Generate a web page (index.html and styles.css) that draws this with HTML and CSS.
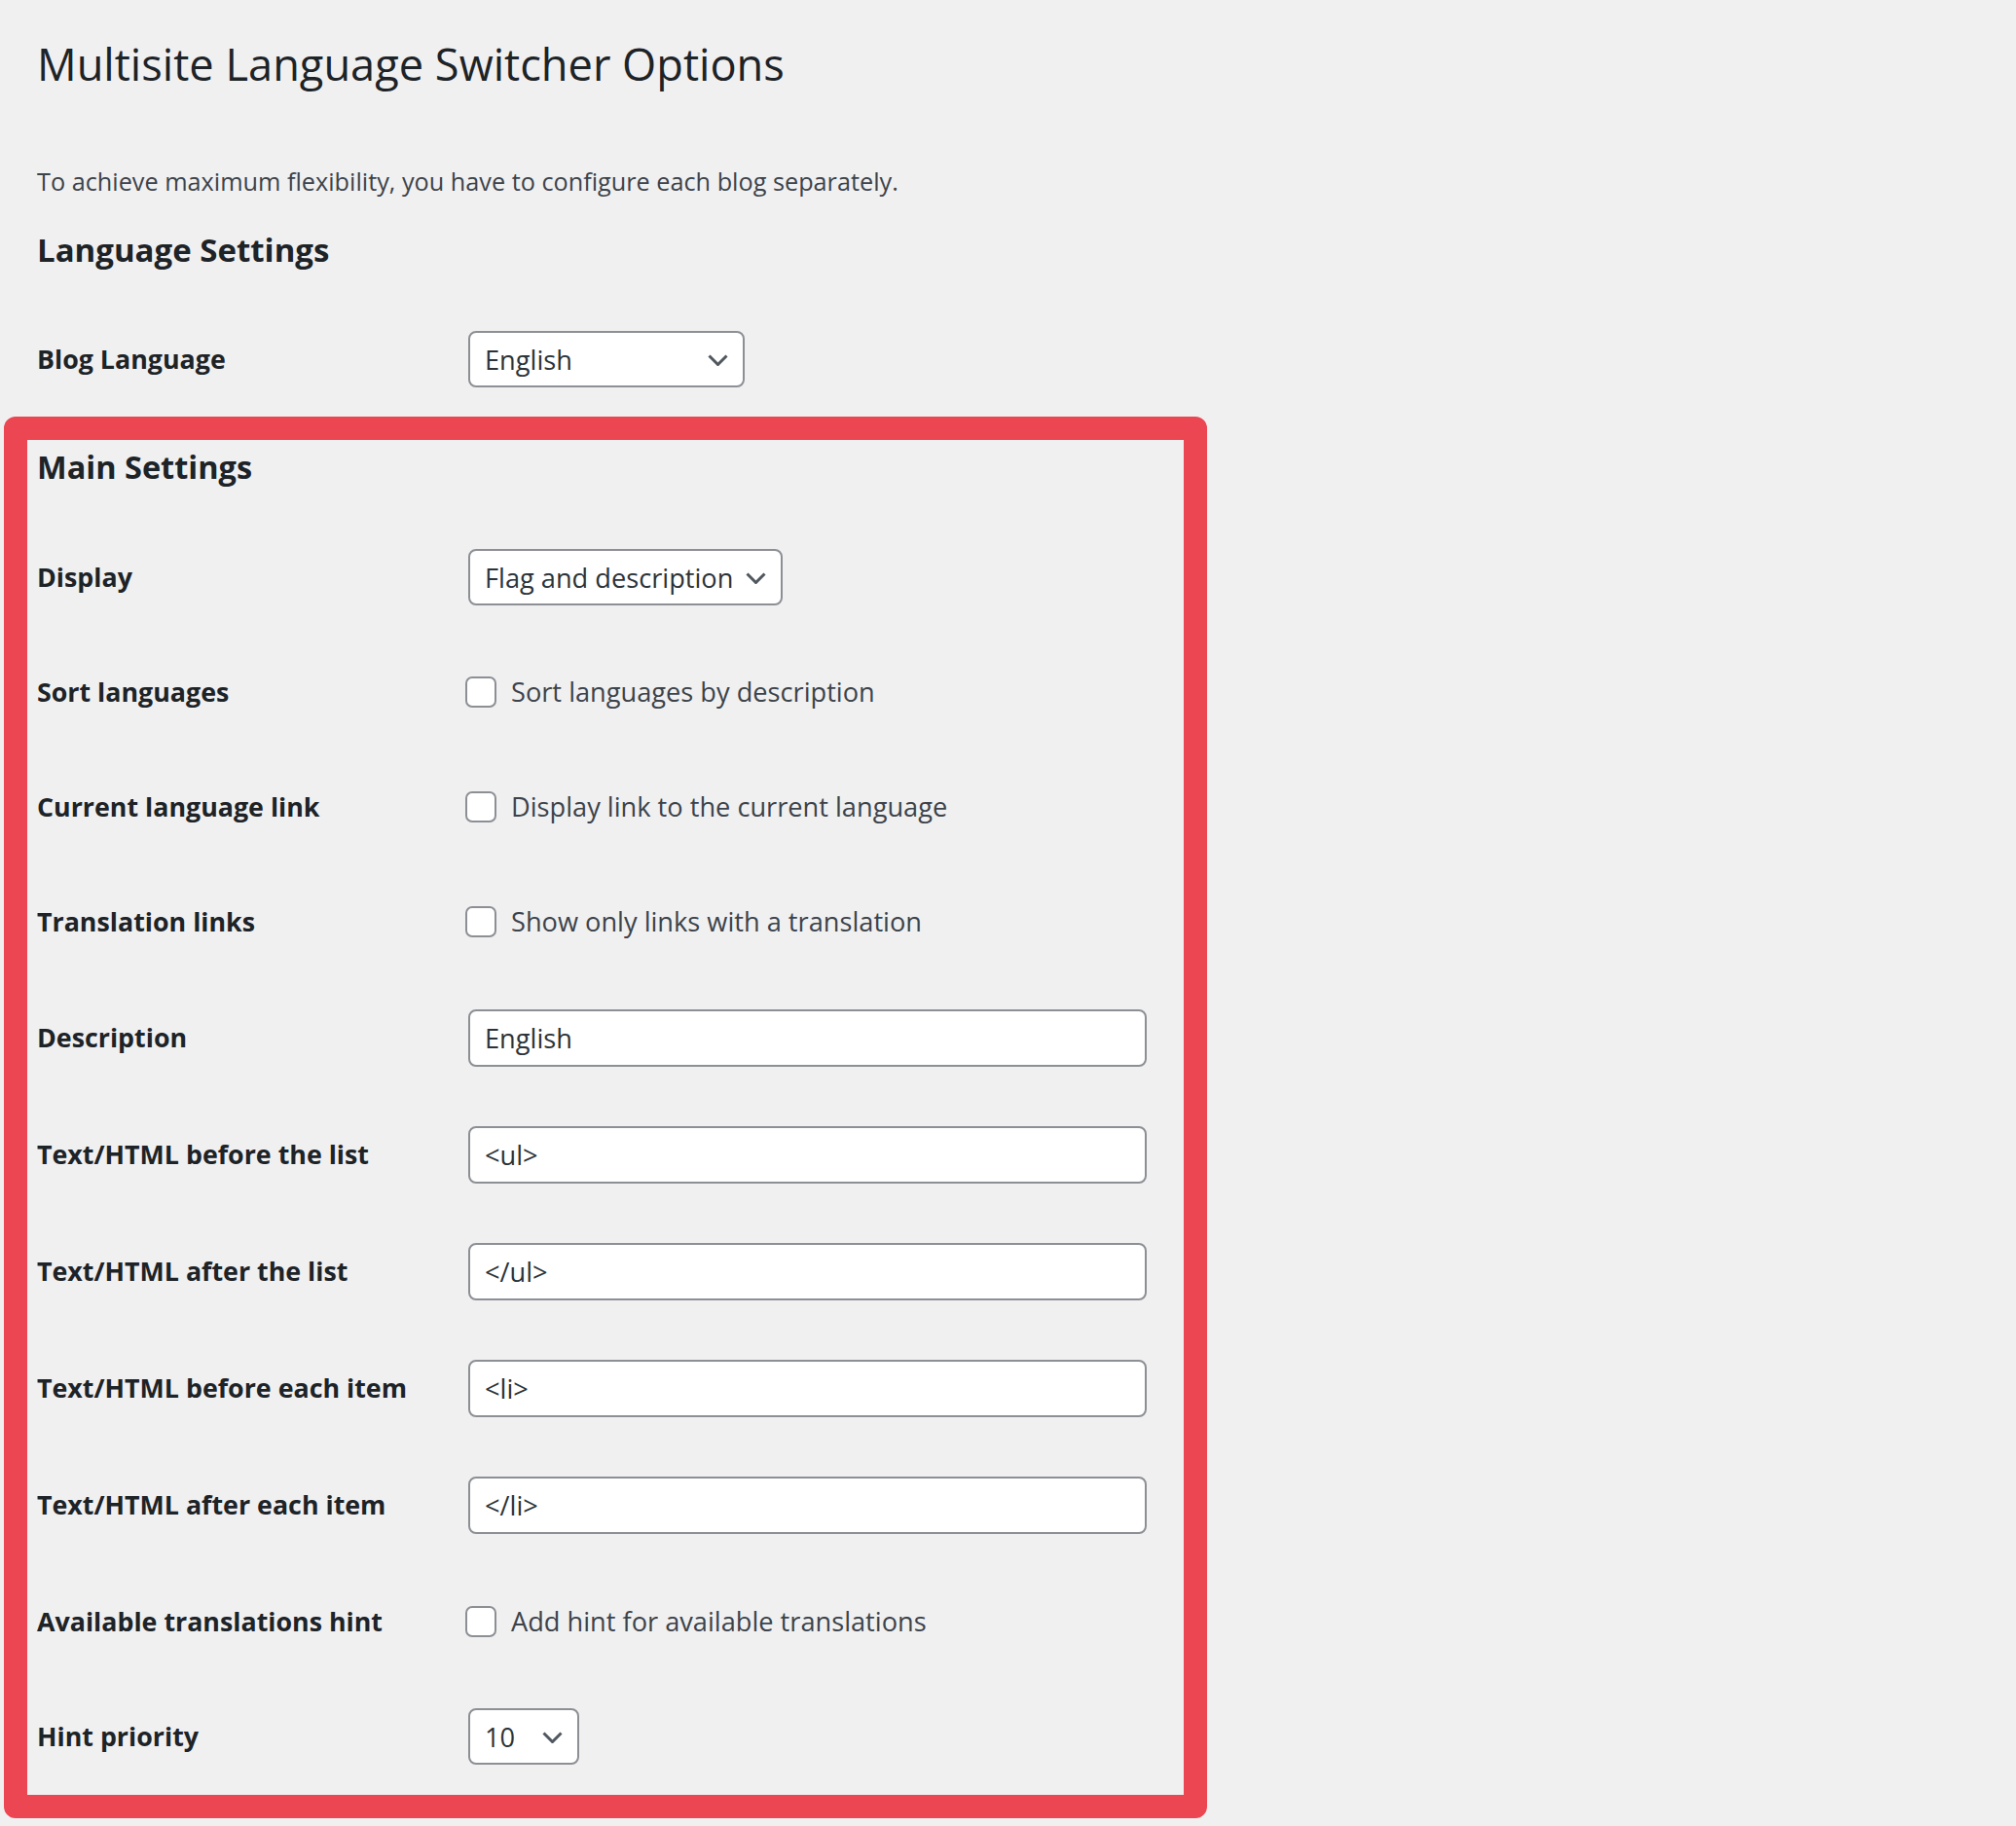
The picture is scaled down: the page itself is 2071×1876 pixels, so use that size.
FILE: index.html
```html
<!DOCTYPE html>
<html lang="en">
<head>
<meta charset="utf-8">
<title>Multisite Language Switcher Options</title>
<link rel="stylesheet" href="styles.css">
</head>
<body>
<div class="wrap">
  <div class="intro">
    <h1 class="title">Multisite Language Switcher Options</h1>
    <p class="lead">To achieve maximum flexibility, you have to configure each blog separately.</p>
    <h2 class="section-title">Language Settings</h2>
    <div class="row row--first">
      <div class="label">Blog Language</div>
      <div class="select select--lang"><span>English</span><svg class="chev" viewBox="0 0 21 12" width="21" height="12"><path d="M1.5 1.5 L10.5 10.5 L19.5 1.5" fill="none" stroke="#50575e" stroke-width="3"/></svg></div>
    </div>
  </div>

  <div class="highlight">
    <h2 class="section-title section-title--boxed">Main Settings</h2>
    <div class="rows">
      <div class="row">
        <div class="label">Display</div>
        <div class="select select--display"><span>Flag and description</span><svg class="chev" viewBox="0 0 21 12" width="21" height="12"><path d="M1.5 1.5 L10.5 10.5 L19.5 1.5" fill="none" stroke="#50575e" stroke-width="3"/></svg></div>
      </div>
      <div class="row">
        <div class="label">Sort languages</div>
        <label class="check"><input type="checkbox" class="box"><span>Sort languages by description</span></label>
      </div>
      <div class="row">
        <div class="label">Current language link</div>
        <label class="check"><input type="checkbox" class="box"><span>Display link to the current language</span></label>
      </div>
      <div class="row">
        <div class="label">Translation links</div>
        <label class="check"><input type="checkbox" class="box"><span>Show only links with a translation</span></label>
      </div>
      <div class="row row--input">
        <div class="label">Description</div>
        <input type="text" class="field" value="English">
      </div>
      <div class="row row--input">
        <div class="label">Text/HTML before the list</div>
        <input type="text" class="field" value="&lt;ul&gt;">
      </div>
      <div class="row row--input">
        <div class="label">Text/HTML after the list</div>
        <input type="text" class="field" value="&lt;/ul&gt;">
      </div>
      <div class="row row--input">
        <div class="label">Text/HTML before each item</div>
        <input type="text" class="field" value="&lt;li&gt;">
      </div>
      <div class="row row--input">
        <div class="label">Text/HTML after each item</div>
        <input type="text" class="field" value="&lt;/li&gt;">
      </div>
      <div class="row row--hint">
        <div class="label">Available translations hint</div>
        <label class="check"><input type="checkbox" class="box"><span>Add hint for available translations</span></label>
      </div>
      <div class="row">
        <div class="label">Hint priority</div>
        <div class="select select--priority"><span>10</span><svg class="chev" viewBox="0 0 21 12" width="21" height="12"><path d="M1.5 1.5 L10.5 10.5 L19.5 1.5" fill="none" stroke="#50575e" stroke-width="3"/></svg></div>
      </div>
    </div>
  </div>
</div>
</body>
</html>
```
FILE: styles.css
```css
html, body {
  margin: 0;
  padding: 0;
  background: #f0f0f1;
}
body {
  font-family: "Open Sans", "Noto Sans", "Liberation Sans", sans-serif;
  color: #3c434a;
}
.wrap {
  padding-left: 4px;
  width: 1236px;
  padding-bottom: 7px;
}
.intro {
  padding-left: 34px;
}
.title {
  margin: 34px 0 0;
  height: 64px;
  line-height: 64px;
  font-size: 45.2px;
  font-weight: 400;
  color: #1d2327;
}
.lead {
  margin: 70px 0 0;
  line-height: 36px;
  font-size: 25.25px;
  color: #3c434a;
}
.section-title {
  margin: 33px 0 0;
  line-height: 40px;
  font-size: 33px;
  font-weight: 700;
  color: #1d2327;
}
.section-title--boxed {
  margin: 0;
  font-size: 32.5px;
}
.row {
  display: flex;
  align-items: center;
  height: 118px;
}
.row--first {
  margin-top: 33px;
}
.row--input {
  height: 120px;
}
.row--hint {
  height: 119px;
}
.label {
  flex: none;
  width: 443px;
  font-size: 26.8px;
  line-height: 36px;
  font-weight: 700;
  color: #1d2327;
}
.highlight {
  box-sizing: border-box;
  width: 1236px;
  border: 24px solid #eb4651;
  border-radius: 12px;
  padding: 8px 0 1px 10px;
}
.rows {
  margin-top: 34px;
}
.select {
  box-sizing: border-box;
  display: flex;
  align-items: center;
  justify-content: space-between;
  height: 58px;
  border: 2px solid #8c8f94;
  border-radius: 8px;
  background: #fff;
  padding: 0 15px 0 15px;
  font-size: 27.2px;
  color: #2c3338;
}
.select--lang { width: 284px; }
.select--display { width: 323px; }
.select--priority { width: 114px; }
.chev {
  flex: none;
  display: block;
  margin-top: 2px;
}
.field {
  box-sizing: border-box;
  width: 697px;
  height: 59px;
  margin: 0;
  border: 2px solid #8c8f94;
  border-radius: 8px;
  background: #fff;
  padding: 0 15px;
  font-family: "Open Sans", "Noto Sans", "Liberation Sans", sans-serif;
  font-size: 27.2px;
  color: #2c3338;
  outline: none;
}
.check {
  display: flex;
  align-items: center;
  font-size: 27.2px;
  line-height: 36px;
  color: #3c434a;
}
.box {
  appearance: none;
  -webkit-appearance: none;
  box-sizing: border-box;
  flex: none;
  width: 32px;
  height: 32px;
  margin: 0 15px 0 -3px;
  border: 2px solid #8c8f94;
  border-radius: 7px;
  background: #fff;
}
```
